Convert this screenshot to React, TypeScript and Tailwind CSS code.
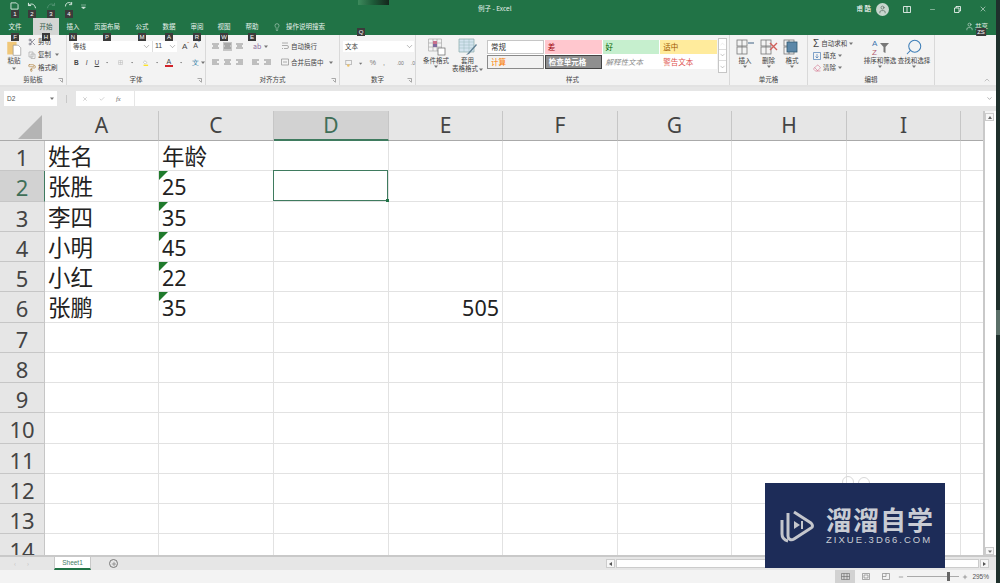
import React from "react";
import { ChevronDown, ChevronUp, Scissors, Search, User, X, Minus, Check, Plus, Lightbulb, PaintRoller, Eraser } from "lucide-react";

const COLS = [
  { k: "A", w: 114 }, { k: "C", w: 115 }, { k: "D", w: 115 }, { k: "E", w: 114 },
  { k: "F", w: 115 }, { k: "G", w: 114 }, { k: "H", w: 115 }, { k: "I", w: 114 }, { k: "", w: 24 },
];
const DATA: Record<number, Record<string, string>> = {
  1: { A: "姓名", C: "年龄" },
  2: { A: "张胜", C: "25" },
  3: { A: "李四", C: "35" },
  4: { A: "小明", C: "45" },
  5: { A: "小红", C: "22" },
  6: { A: "张鹏", C: "35", E: "505" },
};
const ROWS = Array.from({ length: 14 }, (_, i) => i + 1);
const TABS: [string, number, number][] = [
  ["文件", 24, 0], ["开始", 26, 6], ["插入", 26, 1], ["页面布局", 38, 2], ["公式", 26, 3],
  ["数据", 26, 1], ["审阅", 26, 2], ["视图", 26, 1], ["帮助", 26, 2],
];
const TIPS: [string, number, number][] = [
  ["1", 15, 10], ["2", 32, 10], ["3", 51, 10], ["4", 69, 10],
  ["F", 15, 33], ["H", 46, 33], ["N", 73, 33], ["P", 107, 33], ["M", 142, 33], ["A", 169, 33], ["R", 197, 33], ["W", 224, 33], ["E", 252, 33],
  ["Q", 361, 28], ["ZS", 981, 28],
];

function Group({ w, label, launcher, children }: { w: number; label: string; launcher?: boolean; children: React.ReactNode }) {
  return (
    <div className="relative flex h-full shrink-0 flex-col border-r border-[#d9d9d9]" style={{ width: w }}>
      <div className="flex min-h-0 flex-1">{children}</div>
      <div className="h-[11px] text-center text-[6.5px] leading-[11px] text-[#444]">{label}</div>
      {launcher && (
        <svg className="absolute bottom-[2px] right-[3px]" width="5" height="5" viewBox="0 0 5 5">
          <path d="M.5.5h4v4M2 2l2 2" fill="none" stroke="#888" strokeWidth=".7" />
        </svg>
      )}
    </div>
  );
}

function Lines({ align = "left", active = false }: { align?: "left" | "center" | "right"; active?: boolean }) {
  const x = align === "left" ? 1 : align === "center" ? 2 : 3;
  return (
    <svg width="9" height="9" viewBox="0 0 9 9" className={active ? "bg-[#c6c6c6]" : ""}>
      <path d={`M1 2h7M${x} 4h5M1 6h7`} stroke="#8a8a8a" strokeWidth="1" />
    </svg>
  );
}

function Dn() {
  return <svg width="4" height="3" viewBox="0 0 4 3"><path d="M0 .5h4L2 3z" fill="#777" /></svg>;
}

function StyleCell({ children, className }: { children: React.ReactNode; className: string }) {
  return <div className={`flex h-[14px] items-center overflow-hidden px-[3px] text-[7.5px] ${className}`}>{children}</div>;
}

function BigBtn({ w, icon, text, caret = true }: { w: number; icon: React.ReactNode; text: React.ReactNode; caret?: boolean }) {
  return (
    <div className="flex flex-col items-center pt-[2px] text-center text-[6.5px] leading-[8px] text-[#444]" style={{ width: w }}>
      <div className="flex h-[19px] items-center justify-center">{icon}</div>
      <div className="mt-[0px]">{text}</div>
      {caret && <div className="mt-[1px]"><Dn /></div>}
    </div>
  );
}

function GridIcon({ over }: { over?: "insert" | "delete" | "format" }) {
  return (
    <svg width="20" height="18" viewBox="0 0 20 18">
      <g fill="none" stroke="#777" strokeWidth=".8">
        <rect x="2" y="2" width="10" height="6" />
        <rect x="2" y="9" width="10" height="7" />
        <path d="M7 2v14" />
      </g>
      {over === "insert" && <path d="M13 5h6" stroke="#9ab" strokeWidth="2" />}
      {over === "delete" && <path d="M11 5l7 7M18 5l-7 7" stroke="#d0605a" strokeWidth="1.4" />}
      {over === "format" && <rect x="5" y="4" width="10" height="10" fill="#5b87a8" stroke="#30576f" strokeWidth=".8" />}
    </svg>
  );
}

export default function App() {
  return (
    <div
      className="relative flex h-[583px] w-[1000px] overflow-hidden bg-[#e6e6e6]"
      style={{ fontFamily: '"Noto Sans CJK SC", "Liberation Sans", sans-serif' }}
    >
      <div className="flex h-full w-[996px] shrink-0 flex-col">
        {/* title bar */}
        <div className="relative flex h-[18px] shrink-0 items-center bg-[#217346] pl-[10px] text-white">
          <div className="flex w-[90px] -translate-y-[3px] items-center gap-[7px]">
            <svg width="9" height="8" viewBox="0 0 10 9"><path d="M1 1h6l2 2v5H1z" fill="none" stroke="#dfeee6" strokeWidth="1" /></svg>
            <svg width="12" height="8" viewBox="0 0 12 9"><path d="M2 4c3-3 7-2 8 3M2 1v3h3" fill="none" stroke="#dfeee6" strokeWidth="1.1" /></svg>
            <svg width="12" height="8" viewBox="0 0 12 9"><path d="M10 4C7 1 3 2 2 7M10 1v3H7" fill="none" stroke="#4f9070" strokeWidth="1.1" /></svg>
            <svg width="10" height="8" viewBox="0 0 10 9"><path d="M1 5a4 4 0 0 1 7-3M8 0v3H5" fill="none" stroke="#dfeee6" strokeWidth="1" /></svg>
            <svg width="5" height="5" viewBox="0 0 5 5"><path d="M0 1h5M.5 3h4L2.500 5z" fill="#cfe3d8" stroke="#cfe3d8" strokeWidth=".5" /></svg>
          </div>
          <div className="absolute left-[358px] top-0 h-[5px] w-[31px] bg-gradient-to-r from-[#3d8a5c] via-[#1d5a38] to-[#14261c]" />
          <div className="ml-[378px] text-[6.5px] text-[#e8f2ec]">例子 - Excel</div>
          <div className="ml-auto flex items-center pr-[9px]">
            <span className="mr-[5px] text-[6.5px]">甫 酷</span>
            <span className="mr-[14px] flex h-[13px] w-[13px] items-center justify-center rounded-full bg-[#c8d6ce]"><User size={9} color="#5f6f66" /></span>
            <svg className="mr-[18px]" width="8" height="7" viewBox="0 0 8 7"><path d="M.5.5h7v6h-7zM4 .5v6" fill="none" stroke="#fff" strokeWidth=".8" /></svg>
            <Minus className="mr-[18px]" size={7} strokeWidth={1.5} />
            <svg className="mr-[18px]" width="7" height="7" viewBox="0 0 7 7"><path d="M.5 2h4.500v4.500H.5zM2 2V.5h4.500V5H5" fill="none" stroke="#fff" strokeWidth=".8" /></svg>
            <X size={8} strokeWidth={1.5} />
          </div>
        </div>
        {/* tabs */}
        <div className="flex h-[17px] shrink-0 items-stretch bg-[#217346] pl-[3px] text-[6.5px] text-[#e8f2ec]">
          {TABS.map(([t, w, ml]) => (
            <div
              key={t}
              className={`flex items-center justify-center ${t === "开始" ? "bg-[#d4d6d4] text-[#33584a]" : ""}`}
              style={{ width: w, marginLeft: ml }}
            >
              {t}
            </div>
          ))}
          <div className="ml-[8px] flex items-center gap-[5px]">
            <Lightbulb size={8} strokeWidth={1.4} />
            <span>操作说明搜索</span>
          </div>
          <div className="ml-auto flex items-center gap-[1px] pr-[8px]">
            <User size={9} strokeWidth={1.4} />
            <span>共享</span>
          </div>
        </div>
        {/* ribbon */}
        <div className="flex h-[52px] shrink-0 border-b-2 border-[#e2e2e2] bg-[#f3f3f3] text-[#444]">
          <Group w={67} label="剪贴板" launcher>
            <div className="flex w-[28px] flex-col items-center pt-[6px] text-[6.5px] leading-[8px]">
              <svg width="18" height="16" viewBox="0 0 20 19">
                <rect x="2" y="1" width="11" height="15" fill="#f0c778" />
                <path d="M9 5h6l3 3v9H9z" fill="#fff" stroke="#888" strokeWidth=".7" />
              </svg>
              <span className="-mt-[1px]">粘贴</span>
              <span className="mt-[3px]"><Dn /></span>
            </div>
            <div className="flex flex-col gap-[4px] pt-[2px] text-[6.5px] leading-[9px]">
              <div className="flex items-center gap-[2px]"><Scissors size={8} color="#667" />剪切</div>
              <div className="flex items-center gap-[2px]">
                <svg width="8" height="8" viewBox="0 0 8 8"><path d="M1 1h4v5H1zM3 3h4v4.500H3z" fill="none" stroke="#aaa" strokeWidth=".7" /></svg>
                复制<span className="ml-[2px]"><Dn /></span>
              </div>
              <div className="flex items-center gap-[2px]"><PaintRoller size={8} color="#b58a4a" />格式刷</div>
            </div>
          </Group>
          <Group w={139} label="字体" launcher>
            <div className="flex w-full flex-col gap-[5px] pl-[4px] pt-[6px]">
              <div className="flex h-[11px] items-center text-[6.5px]">
                <div className="flex h-full w-[81px] items-center justify-between bg-white pl-[2px] pr-[1px]">等线<ChevronDown size={9} strokeWidth={1} /></div>
                <div className="flex h-full w-[25px] items-center justify-between border-l border-[#ddd] bg-white pl-[2px]"><span className="text-[7px]" style={{ fontFamily: "Liberation Sans" }}>11</span><ChevronDown size={9} strokeWidth={1} /></div>
                <div className="ml-[5px] flex gap-[4px] text-[8px]" style={{ fontFamily: "Liberation Sans" }}>
                  <span>A<sup className="text-[#c86a2b]">ˆ</sup></span>
                  <span className="text-[7px]">A<sup className="text-[#4a7db5]">ˇ</sup></span>
                </div>
              </div>
              <div className="flex h-[11px] items-center gap-[7px] pl-[3px] text-[6.5px]" style={{ fontFamily: "Liberation Sans" }}>
                <b>B</b><i>I</i><u>U</u><Dn />
                <svg className="ml-[3px]" width="9" height="9" viewBox="0 0 9 9"><path d="M1 1h7v7H1zM4.500 1v7M1 4.500h7" fill="none" stroke="#aaa" strokeWidth=".7" /></svg>
                <Dn />
                <svg className="ml-[3px]" width="10" height="10" viewBox="0 0 10 10"><path d="M3 1l4 3-3 3-3-3z" fill="#fff" stroke="#777" strokeWidth=".6" /><rect x="1" y="8" width="8" height="2" fill="#ffe100" /></svg>
                <Dn />
                <span className="flex flex-col items-center text-[7px] leading-[7px]">A<span className="h-[2px] w-[8px] bg-[#d2232a]" /></span>
                <Dn />
                <span className="ml-[3px] flex items-center gap-[2px] text-[#2f7da5]">文<Dn /></span>
              </div>
            </div>
          </Group>
          <Group w={134} label="对齐方式" launcher>
            <div className="flex w-full pl-[5px] pt-[5px]">
              <div className="flex w-[70px] flex-col gap-[4px]">
                <div className="flex h-[12px] items-center gap-[3px]">
                  <Lines align="center" /><Lines align="center" active /><Lines align="center" />
                  <span className="ml-[6px] text-[7px] text-[#8a6a9a]">ab</span><Dn />
                </div>
                <div className="flex h-[12px] items-center gap-[3px]">
                  <Lines /><Lines align="center" /><Lines align="right" />
                  <span className="ml-[4px] flex gap-[3px]"><Lines /><Lines align="right" /></span>
                </div>
              </div>
              <div className="flex flex-col gap-[4px] text-[6.5px] leading-[12px]">
                <div className="flex items-center gap-[2px]">
                  <svg width="8" height="8" viewBox="0 0 8 8"><path d="M1 1h6M1 3.500h5a1.500 1.500 0 0 1 0 3H3M1 6.500h1" fill="none" stroke="#999" strokeWidth=".8" /></svg>
                  自动换行
                </div>
                <div className="flex items-center gap-[2px]">
                  <svg width="8" height="8" viewBox="0 0 8 8"><path d="M.5 1h7v6h-7zM2 4h4" fill="none" stroke="#999" strokeWidth=".8" /></svg>
                  合并后居中<span className="ml-[3px]"><Dn /></span>
                </div>
              </div>
            </div>
          </Group>
          <Group w={76} label="数字" launcher>
            <div className="flex w-full flex-col gap-[6px] pl-[3px] pt-[6px]">
              <div className="flex h-[11px] w-[71px] items-center justify-between bg-white pl-[2px] text-[6.5px]">文本<ChevronDown size={9} strokeWidth={1} /></div>
              <div className="flex items-center gap-[7px] pl-[2px] text-[7px] text-[#777]" style={{ fontFamily: "Liberation Sans" }}>
                <svg width="9" height="9" viewBox="0 0 9 9"><rect x="1" y="1" width="7" height="5" fill="none" stroke="#999" strokeWidth=".7" /><circle cx="4" cy="7" r="1.500" fill="#eec26a" /></svg>
                <Dn />
                <span>%</span><span>,</span>
                <span className="ml-[5px] text-[5px]">.00</span><span className="text-[5px]">.0</span>
              </div>
            </div>
          </Group>
          <Group w={314} label="样式">
            <div className="flex w-full items-start pl-[6px]">
              <BigBtn w={28} text="条件格式" icon={
                <svg width="19" height="18" viewBox="0 0 19 18">
                  <path d="M1.500 1h13v12h-13zM6 1v12M10 1v12M1.500 5h13M1.500 9h13" fill="none" stroke="#aaa" strokeWidth=".7" />
                  <rect x="6" y="3" width="4" height="3" fill="#c9708b" /><rect x="6" y="6" width="4" height="3" fill="#7f6a9e" />
                  <rect x="11" y="10" width="7" height="7" fill="#fff" stroke="#666" strokeWidth=".7" />
                </svg>
              } />
              <BigBtn w={35} caret={false} text={<>套用<br />表格格式<span className="ml-[1px] inline-block align-middle"><Dn /></span></>} icon={
                <svg width="20" height="18" viewBox="0 0 20 18">
                  <path d="M1 1h15v13H1z" fill="#d4e4ef" stroke="#8aa" strokeWidth=".7" />
                  <path d="M1 4h15M1 7h15M1 10h15M6 1v13M11 1v13" stroke="#9bb" strokeWidth=".5" />
                  <path d="M10 15l8-9 1 1-8 9-3 1z" fill="#607f93" />
                </svg>
              } />
              <div className="ml-[2px] mt-[5px] grid h-[29px] w-[230px] grid-cols-4 gap-x-[1px] gap-y-[1px] bg-white">
                <StyleCell className="border border-[#c6c6c6] bg-white text-[#333]">常规</StyleCell>
                <StyleCell className="bg-[#ffc7ce] text-[#9c0006]">差</StyleCell>
                <StyleCell className="bg-[#c6efce] text-[#006100]">好</StyleCell>
                <StyleCell className="bg-[#ffeb9c] text-[#9c5700]">适中</StyleCell>
                <StyleCell className="border border-[#8a8a8a] bg-[#f2f2f2] text-[#fa7d00]">计算</StyleCell>
                <StyleCell className="border border-[#444] bg-[#8f8f8f] font-bold text-white">检查单元格</StyleCell>
                <StyleCell className="italic text-[#8a8a8a]">解释性文本</StyleCell>
                <StyleCell className="text-[#e0554f]">警告文本</StyleCell>
              </div>
              <div className="ml-[1px] mt-[3px] flex w-[9px] flex-col border border-[#c6c6c6] bg-white">
                <div className="flex h-[11px] items-center justify-center border-b border-[#ddd]"><ChevronUp size={8} strokeWidth={1} color="#bbb" /></div>
                <div className="flex h-[11px] items-center justify-center border-b border-[#ddd]"><ChevronDown size={8} strokeWidth={1} /></div>
                <div className="flex h-[11px] items-center justify-center"><ChevronDown size={8} strokeWidth={1} /></div>
              </div>
            </div>
          </Group>
          <Group w={78} label="单元格">
            <div className="flex w-full items-start justify-between px-[4px]">
              <BigBtn w={22} text="插入" icon={<GridIcon over="insert" />} />
              <BigBtn w={22} text="删除" icon={<GridIcon over="delete" />} />
              <BigBtn w={22} text="格式" icon={<GridIcon over="format" />} />
            </div>
          </Group>
          <Group w={127} label="编辑">
            <div className="flex w-full items-start pl-[5px]">
              <div className="flex w-[50px] flex-col gap-[3px] pt-[4px] text-[6.5px] leading-[9px]">
                <div className="flex items-center gap-[2px]"><span className="text-[10px] leading-[9px]" style={{ fontFamily: "Liberation Sans" }}>Σ</span>自动求和<Dn /></div>
                <div className="flex items-center gap-[2px]">
                  <svg width="8" height="8" viewBox="0 0 8 8"><path d="M.5.5h7v7h-7zM4 2v4M2.500 4.500L4 6l1.500-1.500" fill="none" stroke="#4a7db5" strokeWidth=".7" /></svg>
                  填充<Dn />
                </div>
                <div className="flex items-center gap-[2px]"><Eraser size={8} color="#d57a92" />清除<Dn /></div>
              </div>
              <BigBtn w={34} text="排序和筛选" icon={
                <svg width="19" height="18" viewBox="0 0 19 18">
                  <text x="1" y="8" fontSize="8" fill="#3f74ae" fontFamily="Liberation Sans">A</text>
                  <text x="1" y="17" fontSize="8" fill="#b45e70" fontFamily="Liberation Sans">Z</text>
                  <path d="M9 5h9l-3.500 4v6l-2-1V9z" fill="#777" />
                </svg>
              } />
              <BigBtn w={34} text="查找和选择" icon={<Search size={18} color="#3f7fb8" strokeWidth={1.4} className="-scale-x-100" />} />
            </div>
          </Group>
          <div className="relative flex-1">
            <ChevronUp className="absolute bottom-[1px] right-[5px]" size={8} strokeWidth={1.2} color="#777" />
          </div>
        </div>
        {/* formula bar */}
        <div className="flex h-[24px] shrink-0 items-center gap-[1px] bg-[#e6e6e6] pl-[4px] pb-[1px] text-[6.5px] text-[#555]">
          <div className="flex h-[15px] w-[53px] items-center justify-between bg-white px-[3px]" style={{ fontFamily: "Liberation Sans" }}>D2<Dn /></div>
          <div className="mx-[8px] h-[8px] w-[1px] bg-[#c8c8c8]" />
          <div className="flex h-[15px] w-[58px] items-center gap-[11px] bg-white pl-[6px] text-[#aaa]">
            <X size={6} /><Check size={6} /><i className="text-[#666]" style={{ fontFamily: "Liberation Serif" }}>fx</i>
          </div>
          <div className="flex h-[15px] flex-1 items-center justify-end bg-white pr-[3px]"><ChevronDown size={7} strokeWidth={1.5} /></div>
        </div>
        {/* sheet area */}
        <div className="flex min-h-0 flex-1">
          <div className="flex w-[985px] min-w-0 flex-col overflow-hidden border-r-2 border-[#c9c9c9]">
            {/* column headers */}
            <div className="flex h-[30px] shrink-0 text-[#444]" style={{ fontFamily: '"Noto Sans", "Liberation Sans", sans-serif' }}>
              <div className="relative h-full w-[45px] shrink-0 border-b border-[#aaa] bg-[#e6e6e6]">
                <svg className="absolute inset-0" width="44" height="29" viewBox="0 0 44 29"><path d="M42 4v24H18z" fill="#b4b4b4" /></svg>
              </div>
              {COLS.map((c) => (
                <div
                  key={c.k}
                  className={`flex shrink-0 items-center justify-center border-r border-[#c6c6c6] text-[21px] leading-none ${
                    c.k === "D" ? "border-b-2 border-b-[#3f7b5f] bg-[#d2d2d2] text-[#3f6f58]" : "border-b border-b-[#aaa] bg-[#e6e6e6]"
                  }`}
                  style={{ width: c.w }}
                >
                  {c.k}
                </div>
              ))}
            </div>
            {/* rows */}
            <div className="min-h-0 flex-1 overflow-hidden bg-white">
              {ROWS.map((r) => (
                <div key={r} className="flex h-[30.25px]">
                  <div
                    className={`flex w-[45px] shrink-0 items-center justify-center border-r border-b pt-[3px] text-[22px] leading-[24px] ${
                      r === 2 ? "border-r-[#3f7b5f] border-b-[#c6c6c6] bg-[#d2d2d2] text-[#3f6f58]" : "border-[#c6c6c6] bg-[#e6e6e6] text-[#444]"
                    }`}
                    style={{ fontFamily: '"Noto Sans", "Liberation Sans", sans-serif' }}
                  >
                    {r}
                  </div>
                  {COLS.map((c) => {
                    const v = DATA[r]?.[c.k];
                    const num = c.k === "C" && r > 1 && !!v;
                    const sel = c.k === "D" && r === 2;
                    return (
                      <div
                        key={c.k}
                        className={`relative flex shrink-0 items-center border-r border-b border-[#e2e2e2] pt-[3px] leading-[24px] text-[#222] ${
                          c.k === "E" ? "justify-end pr-[3px]" : "pl-[3px]"
                        }`}
                        style={{ width: c.w, fontFamily: '"Noto Sans", "Noto Sans CJK SC", sans-serif', fontSize: /\d/.test(v ?? "") ? 21.5 : 22.5 }}
                      >
                        {num && <svg className="absolute left-0 top-0" width="9" height="9" viewBox="0 0 9 9"><path d="M0 0h9L0 9z" fill="#1f7a2c" /></svg>}
                        {v}
                        {sel && (
                          <div className="absolute -left-px -top-px bottom-0 right-0 border-[1.5px] border-[#3f7b5f]">
                            <div className="absolute -bottom-[2px] -right-[2px] h-[3px] w-[3px] bg-[#217346]" />
                          </div>
                        )}
                      </div>
                    );
                  })}
                </div>
              ))}
            </div>
          </div>
          {/* vertical scrollbar */}
          <div className="flex w-[9px] shrink-0 flex-col items-center bg-[#f3f3f3] pt-[2px]">
            <div className="flex h-[8px] w-[9px] items-center justify-center border border-[#ccc] bg-[#f7f7f7]"><svg width="4" height="3" viewBox="0 0 4 3"><path d="M0 3h4L2 0z" fill="#666" /></svg></div>
            <div className="w-[9px] flex-1 bg-white" />
            <div className="flex h-[8px] w-[9px] items-center justify-center border border-[#ccc] bg-[#f7f7f7]"><Dn /></div>
          </div>
          <div className="w-[2px] shrink-0 bg-white" />
        </div>
        {/* sheet tabs */}
        <div className="flex h-[15px] shrink-0 items-stretch border-t-2 border-[#c9c9c9] bg-[#e6e6e6] text-[6.5px] text-[#555]">
          <div className="flex w-[54px] items-center gap-[11px] pl-[14px] text-[#bbb]"><span>‹</span><span>›</span></div>
          <div className="flex w-[37px] items-center justify-center border-x border-b-2 border-[#c8c8c8] border-b-[#217346] bg-white text-[#3f7b5f]" style={{ fontFamily: "Liberation Sans" }}>Sheet1</div>
          <div className="ml-[18px] flex items-center">
            <span className="flex h-[9px] w-[9px] items-center justify-center rounded-full border border-[#777]"><Plus size={6} strokeWidth={2} /></span>
          </div>
          <div className="ml-[488px] flex w-[383px] items-center gap-[1px]">
            <div className="flex h-[9px] w-[9px] items-center justify-center border border-[#ccc] bg-[#f7f7f7]"><svg width="3" height="4" viewBox="0 0 3 4"><path d="M3 0v4L0 2z" fill="#555" /></svg></div>
            <div className="h-[9px] flex-1 border border-[#ccc] bg-white" />
            <div className="flex h-[9px] w-[9px] items-center justify-center border border-[#ccc] bg-[#f7f7f7]"><svg width="3" height="4" viewBox="0 0 3 4"><path d="M0 0v4l3-2z" fill="#555" /></svg></div>
          </div>
        </div>
        {/* status bar */}
        <div className="flex h-[13px] shrink-0 items-stretch justify-end bg-[#f3f3f3] pr-[7px] text-[6.5px] text-[#555]" style={{ fontFamily: "Liberation Sans" }}>
          <div className="flex w-[20px] items-center justify-center bg-[#d2d2d2]"><svg width="9" height="7" viewBox="0 0 9 7"><path d="M.5.5h8v6h-8zM3 .5v6M6 .5v6M.5 3.500h8" fill="none" stroke="#666" strokeWidth=".6" /></svg></div>
          <div className="flex w-[21px] items-center justify-center"><svg width="8" height="7" viewBox="0 0 8 7"><path d="M.5.5h7v6h-7zM2 2h4v3H2z" fill="none" stroke="#777" strokeWidth=".6" /></svg></div>
          <div className="flex w-[20px] items-center justify-center"><svg width="8" height="7" viewBox="0 0 8 7"><path d="M.5.5h7v6h-7zM4 .5v3H.5" fill="none" stroke="#777" strokeWidth=".6" /></svg></div>
          <div className="ml-[2px] flex items-center"><Minus size={6} strokeWidth={2} /></div>
          <div className="mx-[3px] flex w-[52px] items-center justify-end">
            <div className="relative h-[1px] w-full bg-[#aaa]"><div className="absolute right-[9px] top-[-4px] h-[9px] w-[3px] bg-[#666]" /></div>
          </div>
          <div className="flex items-center"><Plus size={6} strokeWidth={2} /></div>
          <div className="ml-[4px] flex items-center">295%</div>
        </div>
      </div>
      {/* dark window edge */}
      <div className="flex w-[4px] shrink-0 flex-col bg-[#1f302c]">
        <div className="h-[310px]" />
        <div className="h-[25px] bg-[#5b6f68]" />
      </div>

      {/* key tips */}
      {TIPS.map(([t, x, y]) => (
        <div
          key={t}
          className="absolute flex h-[8px] min-w-[8px] -translate-x-1/2 items-center justify-center bg-[#3b3b3b] px-[1px] text-[6px] leading-none text-white"
          style={{ left: x, top: y, fontFamily: "Liberation Sans" }}
        >
          {t}
        </div>
      ))}

      {/* watermark */}
      <div className="absolute left-[842px] top-[476px] h-[12px] w-[12px] rounded-full border border-[#d8d8d8]" />
      <div className="absolute left-[858px] top-[477px] h-[12px] w-[12px] rounded-full border border-[#d8d8d8]" />
      <div className="absolute left-[765px] top-[483px] flex h-[85px] w-[180px] items-center bg-[#1d2c58] pl-[14px] text-[#c9ccd4]">
        <svg width="36" height="38" viewBox="0 0 36 38" fill="none" stroke="#c4c6cc" strokeWidth="3">
          <path d="M9 6v23c0 3 3 5 6 3l17-11c2-1 2-3 0-5L15 5" strokeLinejoin="round" />
          <path d="M3 13v14c0 3 2 6 6 7" />
          <path d="M15 14l6 4-6 4z" fill="#c4c6cc" stroke="none" />
          <path d="M23 14v8" strokeWidth="2" />
        </svg>
        <div className="ml-[11px] flex -translate-y-[1px] flex-col">
          <div className="text-[26px] font-bold leading-[30px] tracking-[1px]" style={{ fontFamily: '"Noto Sans CJK SC", sans-serif' }}>溜溜自学</div>
          <div className="text-[9.5px] leading-[11px] tracking-[2px]" style={{ fontFamily: '"Liberation Sans", sans-serif' }}>ZIXUE.3D66.COM</div>
        </div>
      </div>
    </div>
  );
}
